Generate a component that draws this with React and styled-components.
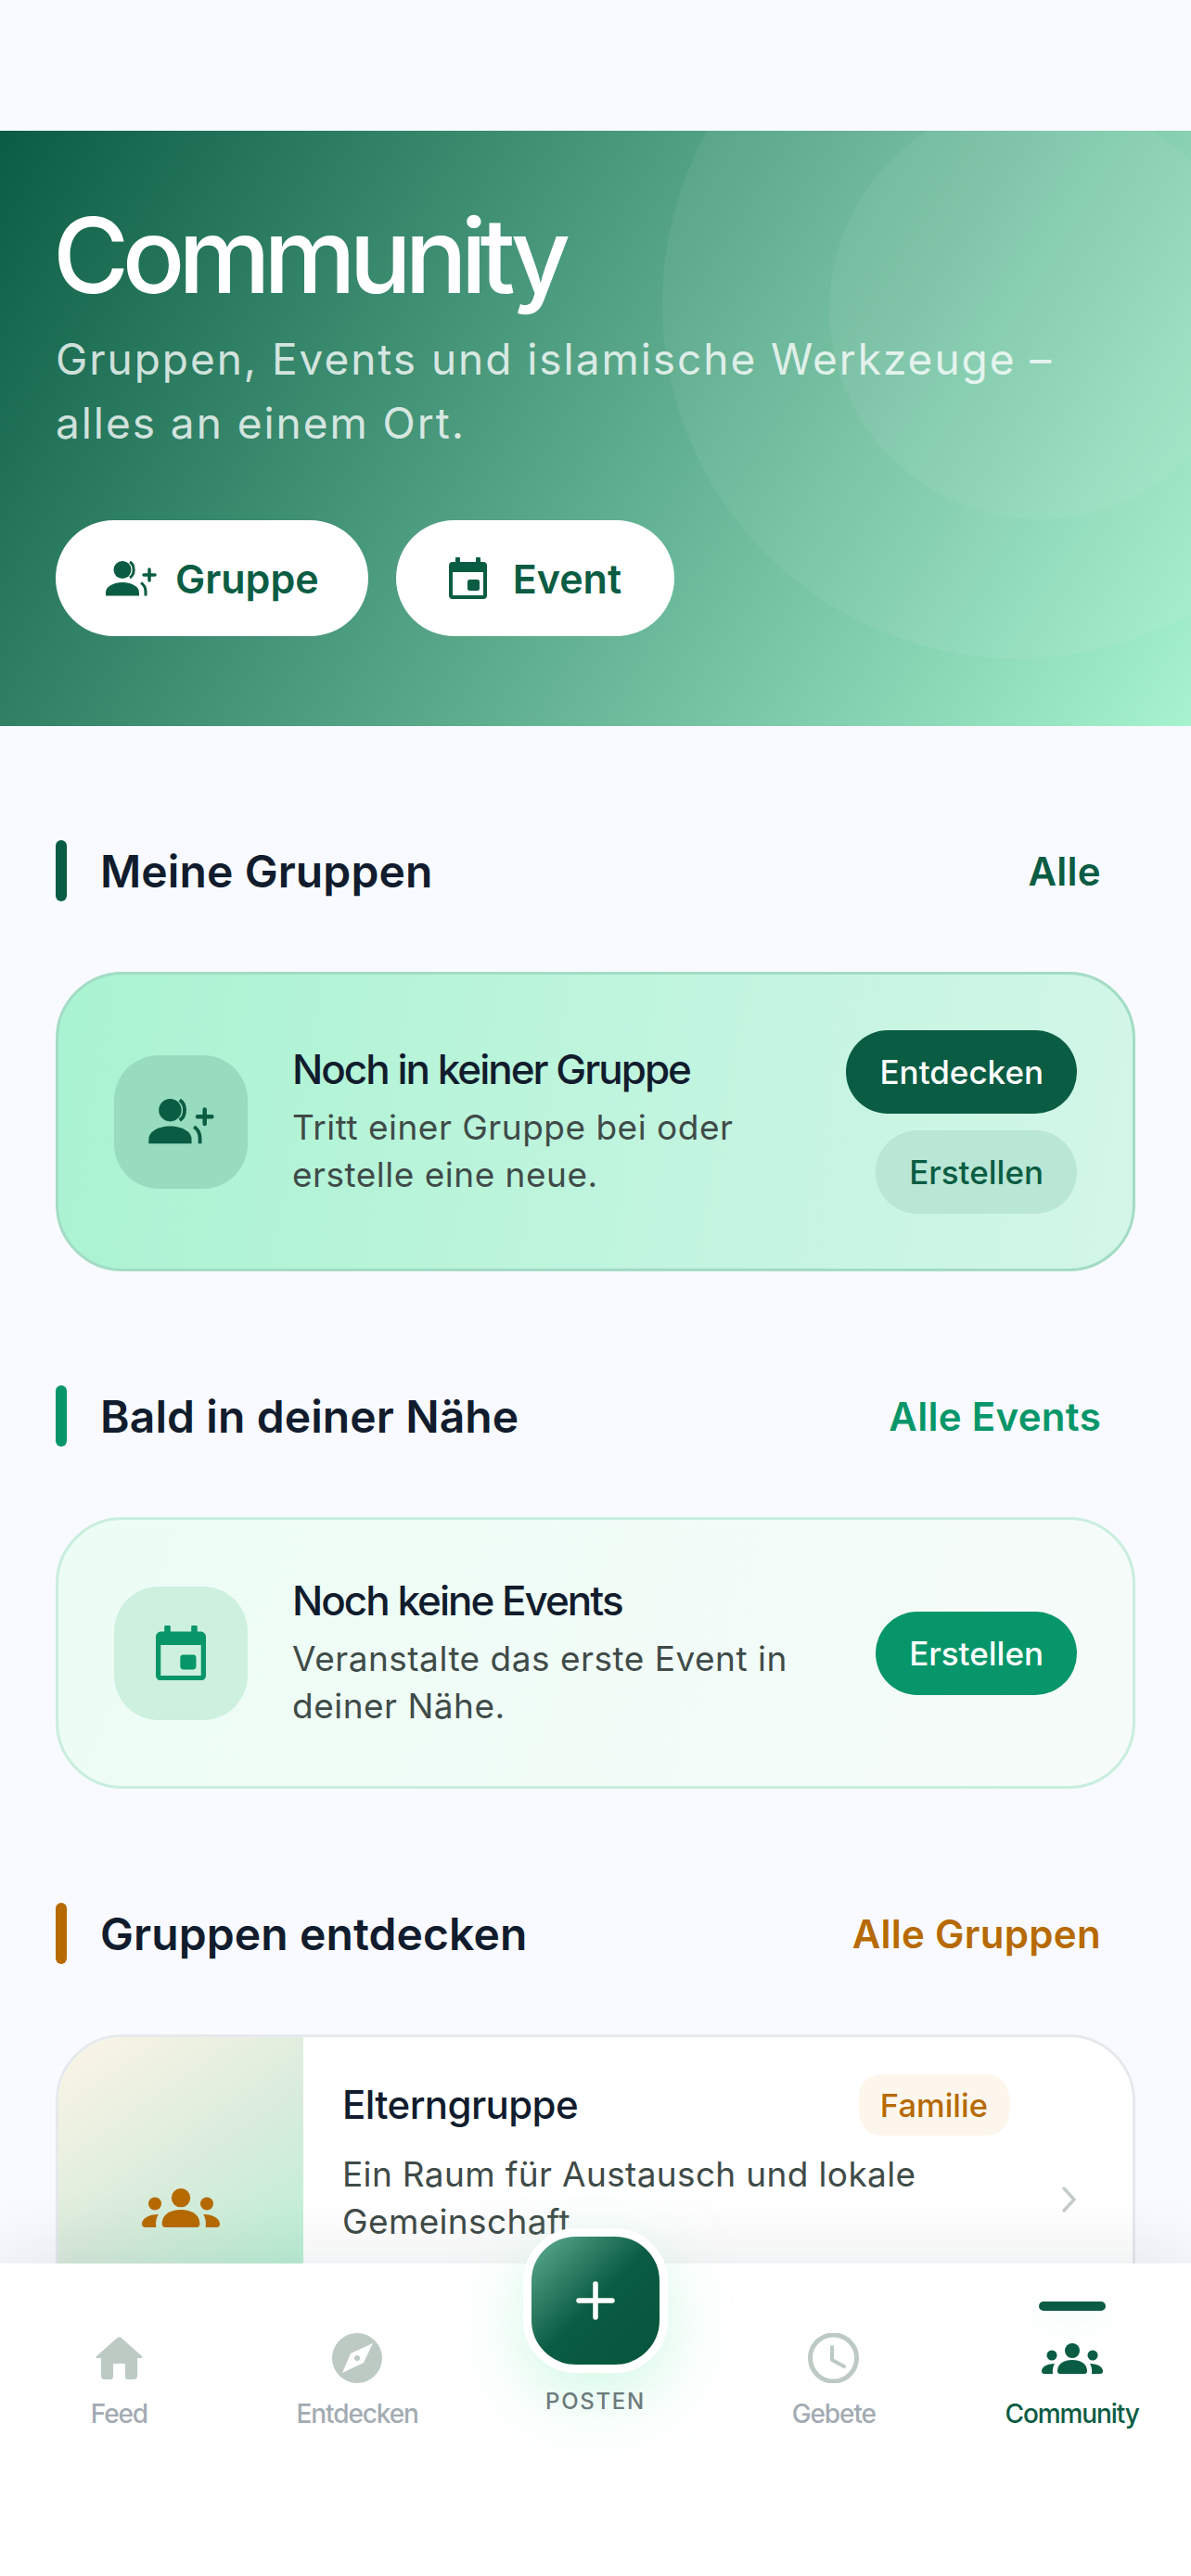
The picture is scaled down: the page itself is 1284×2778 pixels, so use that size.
import { createGlobalStyle, styled } from "styled-components";

const GREEN = "#0a5c43";
const MINT = "#079669";
const AMBER = "#b66a00";
const MUTED = "#bdcac3";

const GroupAddIcon = ({ width = 56, color = GREEN }) => (
  <svg width={width} viewBox="0 0 56 38" fill="none">
    <circle cx="19" cy="9.5" r="9.5" fill={color} />
    <path d="M1 37.5V34c0-7 9-11 18-11s18 4 18 11v3.5z" fill={color} />
    <path d="M27 1c5 3 6 13 0 17" stroke={color} strokeWidth="3" />
    <path d="M39 23.5c3 2 5 6 5 9.500v4.500" stroke={color} strokeWidth="3" />
    <path d="M48 9v12M42 15h12" stroke={color} strokeWidth="3.500" strokeLinecap="round" />
  </svg>
);

const CalendarIcon = ({ width = 41, color = GREEN }) => (
  <svg width={width} viewBox="0 0 41 45" fill="none">
    <path
      fillRule="evenodd"
      d="M8 0h3a1 1 0 0 1 1 1v4h17V1a1 1 0 0 1 1-1h3a1 1 0 0 1 1 1v4h3a4 4 0 0 1 4 4v32a4 4 0 0 1-4 4H4a4 4 0 0 1-4-4V9a4 4 0 0 1 4-4h3V1a1 1 0 0 1 1-1zM4 16v25h33V16z"
      fill={color}
    />
    <rect x="20" y="24" width="13" height="12" rx="2.500" fill={color} />
  </svg>
);

const GroupsIcon = ({ width = 66, color = GREEN }) => (
  <svg width={width} viewBox="0 0 66 33" fill={color}>
    <circle cx="33" cy="8" r="8" />
    <circle cx="11" cy="13" r="5.500" />
    <circle cx="55" cy="13" r="5.500" />
    <path d="M17 30c0-8 7-12 16-12s16 4 16 12c0 2-1 3-3 3H20c-2 0-3-1-3-3z" />
    <path d="M14 22c-2 3-2.500 7-2 11H3c-2 0-3-1-3-3 0-4 5-8 14-8z" />
    <path d="M52 22c2 3 2.500 7 2 11h9c2 0 3-1 3-3 0-4-5-8-14-8z" />
  </svg>
);

const HomeIcon = () => (
  <svg width="51" viewBox="0 0 51 46" fill={MUTED}>
    <path d="M23.500 1Q25.500-.5 27.500 1L50 21Q51.500 23 49.500 23H45V42Q45 46 41 46H35Q32 46 32 43V29H19V43Q19 46 16 46H10Q6 46 6 42V23H1.500Q-.5 23 1 21Z" />
  </svg>
);

const CompassIcon = () => (
  <svg width="54" viewBox="0 0 54 54">
    <circle cx="27" cy="27" r="27" fill={MUTED} />
    <path d="M44 11L34 32 11 43 20 22z" fill="#fff" />
    <circle cx="27" cy="27" r="3" fill={MUTED} />
  </svg>
);

const ClockIcon = () => (
  <svg width="55" viewBox="0 0 55 54" fill="none" stroke={MUTED}>
    <circle cx="27.500" cy="27" r="25" strokeWidth="5" />
    <path d="M26 15v14l13 7" strokeWidth="4" strokeLinecap="round" strokeLinejoin="round" />
  </svg>
);

const GlobalStyle = createGlobalStyle`
  * {
    box-sizing: border-box;
  }

  html, body {
    margin: 0;
    background: #f8faff;
    font-family: "Inter", "Noto Sans", sans-serif;
  }
`;

const Page = styled.div`
  position: relative;
  height: 2778px;
  overflow: hidden;
  padding-top: 141px;
  background: #f8faff;
`;

const Hero = styled.header`
  position: relative;
  overflow: hidden;
  height: 642px;
  padding: 72px 60px 0;
  background: linear-gradient(122deg, #0a5c43 0%, #a7f3d0 100%);
`;

const HeroCircle = styled.span`
  position: absolute;
  left: ${(p) => p.$x - p.$r}px;
  top: ${(p) => p.$y - p.$r}px;
  width: ${(p) => p.$r * 2}px;
  height: ${(p) => p.$r * 2}px;
  border-radius: 50%;
  background: rgba(255, 255, 255, 0.06);
`;

const HeroTitle = styled.h1`
  position: relative;
  margin: 0 0 0 -3px;
  font-size: 112px;
  line-height: 124px;
  font-weight: 500;
  letter-spacing: -7.300px;
  color: #fff;
`;

const HeroText = styled.p`
  position: relative;
  margin: 16px 0 0;
  font-size: 46px;
  line-height: 69px;
  font-weight: 400;
  letter-spacing: 1.950px;
  color: rgba(255, 255, 255, 0.8);
`;

const HeroActions = styled.div`
  position: relative;
  display: flex;
  gap: 30px;
  margin-top: 70px;
`;

const HeroButton = styled.button`
  display: flex;
  align-items: center;
  gap: ${(p) => p.$gap}px;
  height: 125px;
  padding: 0 ${(p) => p.$pad}px;
  border: none;
  border-radius: 63px;
  background: #fff;
  color: ${GREEN};
  font: 600 43px "Inter", sans-serif;
`;

const Section = styled.section`
  padding: 123px 60px 0;
`;

const SectionHead = styled.div`
  display: flex;
  align-items: center;
  justify-content: space-between;
  height: 66px;
  padding-right: 37px;
  margin-bottom: 76px;
`;

const SectionTitle = styled.h2`
  display: flex;
  align-items: center;
  gap: 36px;
  margin: 0;
  font-size: 48px;
  font-weight: 600;
  letter-spacing: 0.100px;
  color: #111c2d;

  &::before {
    content: "";
    width: 12px;
    height: 66px;
    border-radius: 6px;
    background: ${(p) => p.$accent};
  }
`;

const SectionLink = styled.a`
  font-size: 42px;
  font-weight: 600;
  letter-spacing: 0.300px;
  color: ${(p) => p.$accent};
`;

const EmptyCard = styled.div`
  display: flex;
  align-items: center;
  gap: 48px;
  height: ${(p) => p.$height}px;
  padding: 0 60px;
  border: 3px solid ${(p) => p.$border};
  border-radius: 72px;
  background: ${(p) => p.$bg};
`;

const IconTile = styled.div`
  flex: none;
  display: flex;
  align-items: center;
  justify-content: center;
  width: 144px;
  height: 144px;
  border-radius: 48px;
  background: ${(p) => p.$bg};
`;

const CardText = styled.div`
  flex: 1;
  min-width: 0;
`;

const CardTitle = styled.h3`
  margin: 0 0 11px;
  font-size: 44px;
  line-height: 52px;
  font-weight: 500;
  letter-spacing: -2px;
  color: #111c2d;
`;

const CardDesc = styled.p`
  margin: 0;
  font-size: 37px;
  line-height: 51px;
  letter-spacing: ${(p) => p.$spacing ?? 0.5}px;
  color: #3f4b48;
`;

const CardActions = styled.div`
  flex: none;
  display: flex;
  flex-direction: column;
  align-items: flex-end;
  gap: 18px;
`;

const PillButton = styled.button`
  height: 90px;
  padding: 0 36px;
  border: none;
  border-radius: 45px;
  background: ${(p) => p.$bg};
  color: ${(p) => p.$color};
  font: 500 35px "Inter", sans-serif;
`;

const GroupCard = styled.article`
  display: flex;
  height: 374px;
  overflow: hidden;
  border: 3px solid #e6e9ec;
  border-radius: 72px;
  background: #fff;
`;

const GroupThumb = styled.div`
  flex: none;
  display: flex;
  align-items: center;
  justify-content: center;
  width: 264px;
  background: linear-gradient(145deg, #fdf5e6 0%, #d8ecdc 45%, #a7f3d0 100%);
`;

const GroupBody = styled.div`
  flex: 1;
  min-width: 0;
  padding: 40px 0 0 42px;
`;

const GroupTop = styled.div`
  display: flex;
  align-items: center;
  justify-content: space-between;
  width: 719px;
  height: 66px;
  margin-bottom: 16px;
`;

const GroupName = styled.h3`
  margin: -2px 0 0;
  font-size: 42px;
  font-weight: 500;
  letter-spacing: -0.600px;
  color: #111c2d;
`;

const Badge = styled.span`
  display: flex;
  align-items: center;
  height: 66px;
  padding: 0 23px;
  border-radius: 24px;
  background: #fdf6ec;
  color: ${AMBER};
  font-size: 34.500px;
  font-weight: 500;
`;

const GroupRow = styled.div`
  display: flex;
  align-items: flex-start;
  justify-content: space-between;
  padding-right: 58px;
`;

const Chevron = styled.svg`
  flex: none;
  width: 20px;
  margin-top: 38px;
`;

const TabBar = styled.nav`
  position: absolute;
  left: 0;
  right: 0;
  bottom: 0;
  display: grid;
  grid-template-columns: repeat(5, 1fr);
  height: 337px;
  background: #fff;
  box-shadow: 0 -20px 60px rgba(15, 30, 40, 0.07);
`;

const Tab = styled.div`
  position: relative;
  display: flex;
  flex-direction: column;
  align-items: center;
`;

const TabIcon = styled.div`
  display: flex;
  align-items: center;
  justify-content: center;
  height: 54px;
  margin-top: 75px;
`;

const TabLabel = styled.span`
  margin-top: 15px;
  font-size: 28px;
  line-height: 36px;
  font-weight: 500;
  letter-spacing: -1.100px;
  color: ${(p) => (p.$active ? GREEN : "#a3abb3")};
`;

const TabMarker = styled.span`
  position: absolute;
  top: 41px;
  width: 72px;
  height: 10px;
  border-radius: 5px;
  background: ${GREEN};
  box-shadow: 0 10px 24px rgba(167, 243, 208, 0.25);
`;

const Fab = styled.button`
  position: absolute;
  top: -38px;
  left: 50%;
  display: flex;
  align-items: center;
  justify-content: center;
  width: 156px;
  height: 156px;
  margin-left: -78px;
  border: 9px solid #fff;
  border-radius: 57px;
  background: linear-gradient(135deg, #6bb99c 0%, #0a5c43 50%, #06533b 100%);
  background-origin: border-box;
  box-shadow: 0 24px 70px rgba(167, 243, 208, 0.5);
`;

const FabLabel = styled.span`
  position: absolute;
  top: 135px;
  font-size: 24px;
  line-height: 28px;
  font-weight: 500;
  letter-spacing: 1.700px;
  color: #6c7a7b;
`;

const App = () => (
  <Page>
    <GlobalStyle />
    <Hero>
      <HeroCircle $x={1097} $y={186} $r={383} />
      <HeroCircle $x={1121} $y={192} $r={227} />
      <HeroTitle>Community</HeroTitle>
      <HeroText>
        Gruppen, Events und islamische Werkzeuge –
        <br />
        alles an einem Ort.
      </HeroText>
      <HeroActions>
        <HeroButton $gap={20} $pad={53}>
          <GroupAddIcon />
          Gruppe
        </HeroButton>
        <HeroButton $gap={28} $pad={57}>
          <CalendarIcon />
          Event
        </HeroButton>
      </HeroActions>
    </Hero>

    <Section>
      <SectionHead>
        <SectionTitle $accent={GREEN}>Meine Gruppen</SectionTitle>
        <SectionLink $accent={GREEN}>Alle</SectionLink>
      </SectionHead>
      <EmptyCard
        $height={323}
        $border="#a3dcc4"
        $bg="linear-gradient(100deg, #a9f3d2 0%, #d3f6e8 100%)"
      >
        <IconTile $bg="#98dcbf">
          <GroupAddIcon width={72} />
        </IconTile>
        <CardText>
          <CardTitle>Noch in keiner Gruppe</CardTitle>
          <CardDesc>
            Tritt einer Gruppe bei oder
            <br />
            erstelle eine neue.
          </CardDesc>
        </CardText>
        <CardActions>
          <PillButton $bg={GREEN} $color="#fff">Entdecken</PillButton>
          <PillButton $bg="#b9e6d5" $color={GREEN}>Erstellen</PillButton>
        </CardActions>
      </EmptyCard>
    </Section>

    <Section>
      <SectionHead>
        <SectionTitle $accent={MINT}>Bald in deiner Nähe</SectionTitle>
        <SectionLink $accent={MINT}>Alle Events</SectionLink>
      </SectionHead>
      <EmptyCard
        $height={293}
        $border="#c9eedd"
        $bg="linear-gradient(110deg, #ecfdf5 0%, #f6fbf9 100%)"
      >
        <IconTile $bg="#cdf0df">
          <CalendarIcon width={54} color={MINT} />
        </IconTile>
        <CardText>
          <CardTitle>Noch keine Events</CardTitle>
          <CardDesc>
            Veranstalte das erste Event in
            <br />
            deiner Nähe.
          </CardDesc>
        </CardText>
        <CardActions>
          <PillButton $bg={MINT} $color="#fff">Erstellen</PillButton>
        </CardActions>
      </EmptyCard>
    </Section>

    <Section>
      <SectionHead>
        <SectionTitle $accent={AMBER}>Gruppen entdecken</SectionTitle>
        <SectionLink $accent={AMBER}>Alle Gruppen</SectionLink>
      </SectionHead>
      <GroupCard>
        <GroupThumb>
          <GroupsIcon width={84} color={AMBER} />
        </GroupThumb>
        <GroupBody>
          <GroupTop>
            <GroupName>Elterngruppe</GroupName>
            <Badge>Familie</Badge>
          </GroupTop>
          <GroupRow>
            <CardDesc $spacing={0.35}>
              Ein Raum für Austausch und lokale
              <br />
              Gemeinschaft
            </CardDesc>
            <Chevron viewBox="0 0 20 30" fill="none" stroke="#c4cdc9" strokeWidth="3.500" strokeLinecap="round">
              <path d="M4 3l11 12L4 27" />
            </Chevron>
          </GroupRow>
        </GroupBody>
      </GroupCard>
    </Section>

    <TabBar>
      <Tab>
        <TabIcon><HomeIcon /></TabIcon>
        <TabLabel>Feed</TabLabel>
      </Tab>
      <Tab>
        <TabIcon><CompassIcon /></TabIcon>
        <TabLabel>Entdecken</TabLabel>
      </Tab>
      <Tab>
        <Fab>
          <svg width="42" viewBox="0 0 42 42" fill="none" stroke="#fff" strokeWidth="5.500" strokeLinecap="round">
            <path d="M21 3v36M3 21h36" />
          </svg>
        </Fab>
        <FabLabel>POSTEN</FabLabel>
      </Tab>
      <Tab>
        <TabIcon><ClockIcon /></TabIcon>
        <TabLabel>Gebete</TabLabel>
      </Tab>
      <Tab>
        <TabMarker />
        <TabIcon><GroupsIcon /></TabIcon>
        <TabLabel $active>Community</TabLabel>
      </Tab>
    </TabBar>
  </Page>
);

export default App;
